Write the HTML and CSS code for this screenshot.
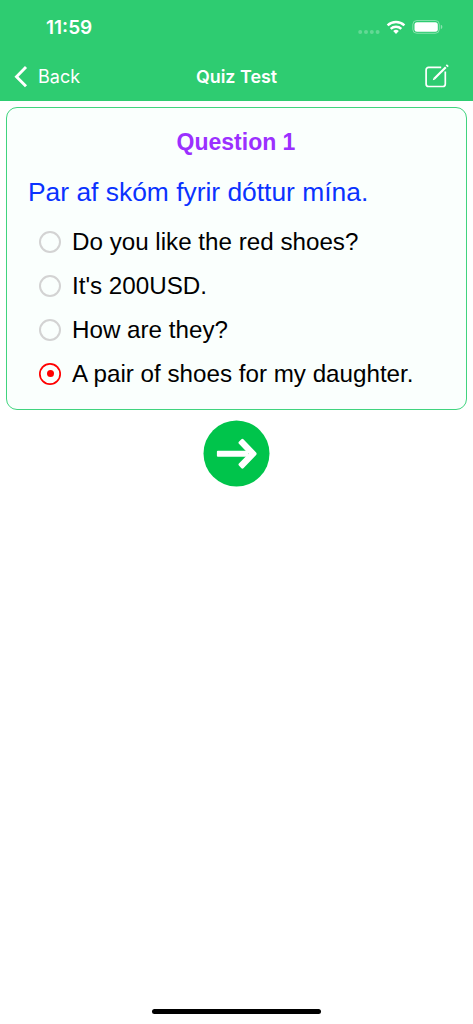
FILE: index.html
```html
<!DOCTYPE html>
<html lang="en">
<head>
<meta charset="utf-8">
<title>Quiz Test</title>
<link rel="stylesheet" href="styles.css">
</head>
<body>
<header class="header">
  <div class="status">
    <span class="time">11:59</span>
    <svg class="status-icons" width="90" height="24" viewBox="0 0 90 24">
      <g fill="#fff" opacity=".25"><circle cx="5.2" cy="17" r="2"/><circle cx="11" cy="17" r="2"/><circle cx="16.8" cy="17" r="2"/><circle cx="22.6" cy="17" r="2"/></g>
      <g fill="none" stroke="#fff" stroke-width="2.5"><path d="M32.6 10.3a12.4 12.4 0 0 1 16.8 0"/><path d="M35.7 13.8a7.8 7.8 0 0 1 10.6 0"/></g>
      <path d="M38.2 16a4.2 4.2 0 0 1 5.6 0L41 19z" fill="#fff"/>
      <rect x="57.8" y="5.5" width="26.5" height="12.8" rx="4" fill="none" stroke="#fff" stroke-opacity=".4"/>
      <rect x="59.5" y="7.2" width="23.3" height="9.6" rx="2.5" fill="#fff"/>
      <path d="M85.8 9.8q1.6.6 1.6 2.2t-1.6 2.2z" fill="#fff" opacity=".45"/>
    </svg>
  </div>
  <nav class="nav">
    <a class="back"><svg width="14" height="24" viewBox="0 0 14 24"><path d="M12 2.1L2.5 11.7l9.5 9.6" fill="none" stroke="#fff" stroke-width="2.9"/></svg><span class="back-label">Back</span></a>
    <span class="title">Quiz Test</span>
    <svg class="edit" width="26" height="26" viewBox="0 0 26 26" fill="none" stroke="#fff" stroke-width="1.7">
      <path d="M17.2 3.4H4.6a2.5 2.5 0 0 0-2.5 2.5V20a2.5 2.5 0 0 0 2.5 2.5h14.2a2.5 2.5 0 0 0 2.5-2.5V7.5"/>
      <path d="M10.2 14.8L21.8 3.2" stroke-width="2.2"/><path d="M22.7 2.3l1.1-1.1" stroke-width="2.6"/><path d="M8.8 16.2l.6-2.2 1.7 1.6z" fill="#fff" stroke="none"/>
    </svg>
  </nav>
</header>
<main>
  <section class="card">
    <h1 class="heading">Question 1</h1>
    <p class="prompt"><span>Par af skóm fyrir dóttur mína.</span></p>
    <ul class="options">
      <li class="option"><i class="radio"></i><span class="answer">Do you like the red shoes?</span></li>
      <li class="option"><i class="radio"></i><span class="answer">It's 200USD.</span></li>
      <li class="option"><i class="radio"></i><span class="answer">How are they?</span></li>
      <li class="option"><i class="radio checked"></i><span class="answer">A pair of shoes for my daughter.</span></li>
    </ul>
  </section>
  <svg class="next" width="67" height="67" viewBox="0 0 67 67"><circle cx="33.5" cy="33.5" r="33" fill="#00c44b"/><path d="M14.9 30.7H45v6H14.9q-1 0-1-1v-4q0-1 1-1z" fill="#fff"/><path d="M35.9 21.8l2.5-2.6q1-.9 2 0l12.5 13q1.5 1.5 0 3l-12.5 13q-1 .9-2 0l-2.5-2.6q-.9-1 0-2l9.6-9.9-9.6-9.9q-.9-1 0-2z" fill="#fff"/></svg>
</main>
<footer class="home"></footer>
</body>
</html>
```
FILE: styles.css
```css
* { box-sizing: border-box; margin: 0; padding: 0; }
body {
  display: flex;
  flex-direction: column;
  height: 1024px;
  background: #fff;
  font-family: "Liberation Sans", Arial, sans-serif;
}
.header { height: 101px; background: #2ecc71; color: #fff; font-family: Inter, sans-serif; }
.status { display: flex; justify-content: space-between; height: 52px; padding: 15px 28px 0 46px; }
.time { font-size: 19px; font-weight: 600; line-height: 24px; padding-top: 1px; }
.nav { display: grid; grid-template-columns: 1fr auto 1fr; align-items: center; height: 49px; padding: 0 23px 0 14px; }
.back { display: flex; align-items: center; gap: 10px; }
.back-label { font-size: 18px; line-height: 22px; padding-top: 1px; }
.title { font-size: 17.9px; font-weight: 600; line-height: 22px; padding: 0 0 0 9px; }
.edit { justify-self: end; }
.card {
  height: 303px;
  margin: 6px 6px 0;
  padding-top: 19px;
  border: 1px solid #40d47e;
  border-radius: 11px;
  background: #fafffd;
}
.heading { text-align: center; font-size: 23px; line-height: 30px; padding-right: 1px; color: #9b30ff; }
.prompt { margin: 19px 0 0 21px; font-size: 26.4px; line-height: 32px; color: #0a32ff; white-space: nowrap; }
.options { margin: 12px 0 0 32px; list-style: none; }
.option { display: flex; align-items: center; gap: 11px; height: 43.9px; font-size: 24.2px; color: #000; white-space: nowrap; }
.answer { padding-top: 1px; }
.radio { display: grid; place-items: center; width: 22px; height: 22px; border: 2px solid #d3d3d3; border-radius: 50%; }
.checked { border: 0; box-shadow: inset 0 0 0 1.7px #f00; }
.checked::after { content: ""; width: 7px; height: 7px; border-radius: 50%; background: #f00; }
.next { display: block; margin: 10px auto 0; }
.home { width: 169px; height: 5px; margin: auto auto 10px; border-radius: 3px; background: #000; }
```
